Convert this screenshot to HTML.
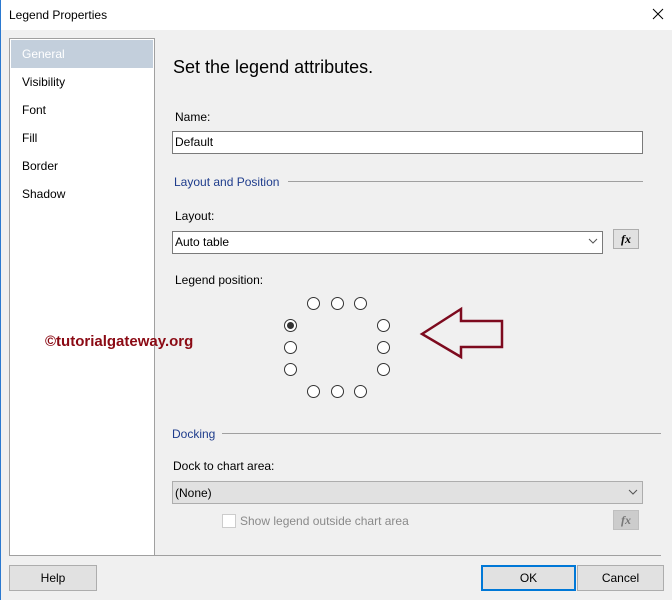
<!DOCTYPE html>
<html><head><style>
body{margin:0;width:672px;height:600px;background:#f0f0f0;font-family:"Liberation Sans",sans-serif;font-size:12px;color:#000;position:relative;overflow:hidden}
.a{position:absolute}
.t{position:absolute;white-space:nowrap}
.rad{position:absolute;width:11px;height:11px;border:1px solid #333;border-radius:50%;background:#fff}
.btn{position:absolute;background:#e1e1e1;border:1px solid #adadad;text-align:center;line-height:24px;font-size:12px}
</style></head><body>
<div class="a" style="left:0;top:0;width:672px;height:30px;background:#fff"></div>
<div class="a" style="left:0;top:0;width:1px;height:600px;background:#2b79d0"></div>
<div class="t" style="left:9px;top:8px;font-size:12px">Legend Properties</div>
<svg class="a" style="left:652px;top:8px" width="12" height="12"><path d="M1 1L11 11M11 1L1 11" stroke="#000" stroke-width="1"/></svg>

<div class="a" style="left:9px;top:38px;width:144px;height:516px;background:#fff;border:1px solid #a0a0a0"></div>
<div class="a" style="left:11px;top:40px;width:142px;height:28px;background:#c3cfdc"></div>
<div class="t" style="left:22px;top:47px;color:#fff">General</div>
<div class="t" style="left:22px;top:75px">Visibility</div>
<div class="t" style="left:22px;top:103px">Font</div>
<div class="t" style="left:22px;top:131px">Fill</div>
<div class="t" style="left:22px;top:159px">Border</div>
<div class="t" style="left:22px;top:187px">Shadow</div>

<div class="t" style="left:173px;top:57px;font-size:18px">Set the legend attributes.</div>
<div class="t" style="left:175px;top:110px">Name:</div>
<div class="a" style="left:172px;top:131px;width:469px;height:21px;background:#fff;border:1px solid #7a7a7a"></div>
<div class="t" style="left:175px;top:135px">Default</div>
<div class="t" style="left:174px;top:175px;color:#1e3c8c">Layout and Position</div>
<div class="a" style="left:288px;top:181px;width:355px;height:1px;background:#a0a0a0"></div>
<div class="t" style="left:175px;top:209px">Layout:</div>
<div class="a" style="left:172px;top:231px;width:429px;height:21px;background:#fff;border:1px solid #7a7a7a"></div>
<div class="t" style="left:175px;top:235px">Auto table</div>
<svg class="a" style="left:588px;top:238px" width="10" height="7"><path d="M1 1L5 5L9 1" fill="none" stroke="#555"/></svg>
<div class="btn" style="left:613px;top:229px;width:24px;height:18px;line-height:18px;font-family:'Liberation Serif',serif;font-style:italic;font-weight:bold">fx</div>
<div class="t" style="left:175px;top:273px">Legend position:</div>

<div class="rad" style="left:307px;top:297px"></div><div class="rad" style="left:331px;top:297px"></div><div class="rad" style="left:354px;top:297px"></div>
<div class="rad" style="left:284px;top:319px"></div><div class="a" style="left:287px;top:322px;width:7px;height:7px;border-radius:50%;background:#333"></div>
<div class="rad" style="left:284px;top:341px"></div><div class="rad" style="left:284px;top:363px"></div>
<div class="rad" style="left:377px;top:319px"></div><div class="rad" style="left:377px;top:341px"></div><div class="rad" style="left:377px;top:363px"></div>
<div class="rad" style="left:307px;top:385px"></div><div class="rad" style="left:331px;top:385px"></div><div class="rad" style="left:354px;top:385px"></div>
<svg class="a" style="left:0;top:0" width="672" height="600"><polygon points="422,334 461,309 461,321 502,321 502,347 461,347 461,357" fill="none" stroke="#7d0a1e" stroke-width="2.5"/></svg>
<div class="t" style="left:45px;top:333px;font-size:15px;font-weight:bold;color:#8b0a14">©tutorialgateway.org</div>

<div class="t" style="left:172px;top:427px;color:#1e3c8c">Docking</div>
<div class="a" style="left:222px;top:433px;width:439px;height:1px;background:#a0a0a0"></div>
<div class="t" style="left:173px;top:459px">Dock to chart area:</div>
<div class="a" style="left:172px;top:481px;width:469px;height:21px;background:#e1e1e1;border:1px solid #adadad"></div>
<div class="t" style="left:175px;top:486px">(None)</div>
<svg class="a" style="left:628px;top:489px" width="10" height="7"><path d="M1 1L5 5L9 1" fill="none" stroke="#555"/></svg>
<div class="a" style="left:222px;top:514px;width:12px;height:12px;background:#fff;border:1px solid #ccc"></div>
<div class="t" style="left:240px;top:514px;color:#8a8a8a">Show legend outside chart area</div>
<div class="btn" style="left:613px;top:510px;width:24px;height:18px;line-height:18px;background:#ccc;border-color:#bfbfbf;color:#777;font-family:'Liberation Serif',serif;font-style:italic;font-weight:bold">fx</div>

<div class="a" style="left:126px;top:555px;width:535px;height:1px;background:#a0a0a0"></div>
<div class="btn" style="left:9px;top:565px;width:86px;height:24px">Help</div>
<div class="btn" style="left:481px;top:565px;width:91px;height:22px;line-height:22px;border:2px solid #0078d7">OK</div>
<div class="btn" style="left:577px;top:565px;width:85px;height:24px">Cancel</div>
</body></html>
